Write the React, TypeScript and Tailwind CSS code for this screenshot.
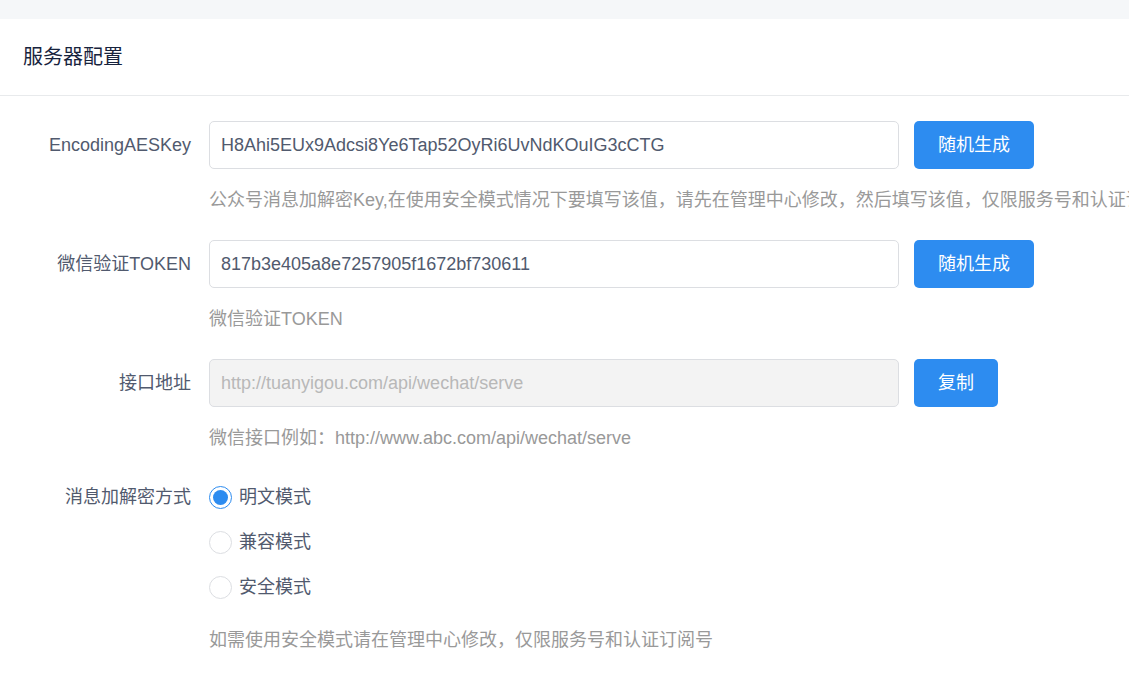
import React from "react";

const font = { fontFamily: '"Liberation Sans", "Noto Sans CJK SC", sans-serif' };

function Field({
  label,
  value,
  button,
  help,
  disabled,
}: {
  label: string;
  value: string;
  button: string;
  help: string;
  disabled?: boolean;
}) {
  return (
    <div className="flex mb-[26px]">
      <label className="w-[191px] shrink-0 text-right h-[48px] leading-[48px] text-[18px] text-[#515a6e] pr-0">
        {label}
      </label>
      <div className="ml-[18px]">
        <div className="flex items-center">
          <input
            readOnly
            value={value}
            className={
              disabled
                ? "w-[690px] h-[48px] px-[11px] rounded-[5px] border border-[#dcdee2] bg-[#f3f3f3] text-[#b8b8b8] text-[18px] outline-none"
                : "w-[690px] h-[48px] px-[11px] rounded-[5px] border border-[#dcdee2] bg-white text-[#515a6e] text-[18px] outline-none"
            }
            style={font}
          />
          <button className="ml-[15px] h-[48px] px-[24px] rounded-[5px] bg-[#2d8cf0] text-white text-[18px]">
            {button}
          </button>
        </div>
        <div className="mt-[18px] leading-[27px] text-[18px] text-[#999] whitespace-nowrap">{help}</div>
      </div>
    </div>
  );
}

function Radio({ label, checked }: { label: string; checked?: boolean }) {
  return (
    <div className="flex items-center h-[45px]">
      <span
        className={
          checked
            ? "w-[23px] h-[23px] rounded-full border border-[#2d8cf0] bg-white flex items-center justify-center"
            : "w-[23px] h-[23px] rounded-full border border-[#dcdee2] bg-white flex items-center justify-center"
        }
      >
        {checked && <span className="w-[15px] h-[15px] rounded-full bg-[#2d8cf0]" />}
      </span>
      <span className="ml-[7px] text-[18px] text-[#515a6e]">{label}</span>
    </div>
  );
}

export default function App() {
  return (
    <div className="w-[1129px] h-[676px] overflow-hidden bg-[#f5f7f9]" style={font}>
      <div className="h-[19px]" />
      <div className="bg-white h-full">
        <div className="h-[77px] border-b border-[#e8eaec] flex items-center px-[23px]">
          <h2 className="text-[20px] text-[#17233d] leading-none">服务器配置</h2>
        </div>
        <div className="pt-[25px]">
          <Field
            label="EncodingAESKey"
            value="H8Ahi5EUx9Adcsi8Ye6Tap52OyRi6UvNdKOuIG3cCTG"
            button="随机生成"
            help="公众号消息加解密Key,在使用安全模式情况下要填写该值，请先在管理中心修改，然后填写该值，仅限服务号和认证订阅号"
          />
          <Field
            label="微信验证TOKEN"
            value="817b3e405a8e7257905f1672bf730611"
            button="随机生成"
            help="微信验证TOKEN"
          />
          <Field
            label="接口地址"
            value="http://tuanyigou.com/api/wechat/serve"
            button="复制"
            help="微信接口例如：http://www.abc.com/api/wechat/serve"
            disabled
          />
          <div className="flex -mt-[3px]">
            <label className="w-[191px] shrink-0 text-right h-[45px] leading-[45px] text-[18px] text-[#515a6e]">
              消息加解密方式
            </label>
            <div className="ml-[18px]">
              <Radio label="明文模式" checked />
              <Radio label="兼容模式" />
              <Radio label="安全模式" />
              <div className="mt-[17px] leading-[27px] text-[18px] text-[#999] whitespace-nowrap">
                如需使用安全模式请在管理中心修改，仅限服务号和认证订阅号
              </div>
            </div>
          </div>
        </div>
      </div>
    </div>
  );
}
